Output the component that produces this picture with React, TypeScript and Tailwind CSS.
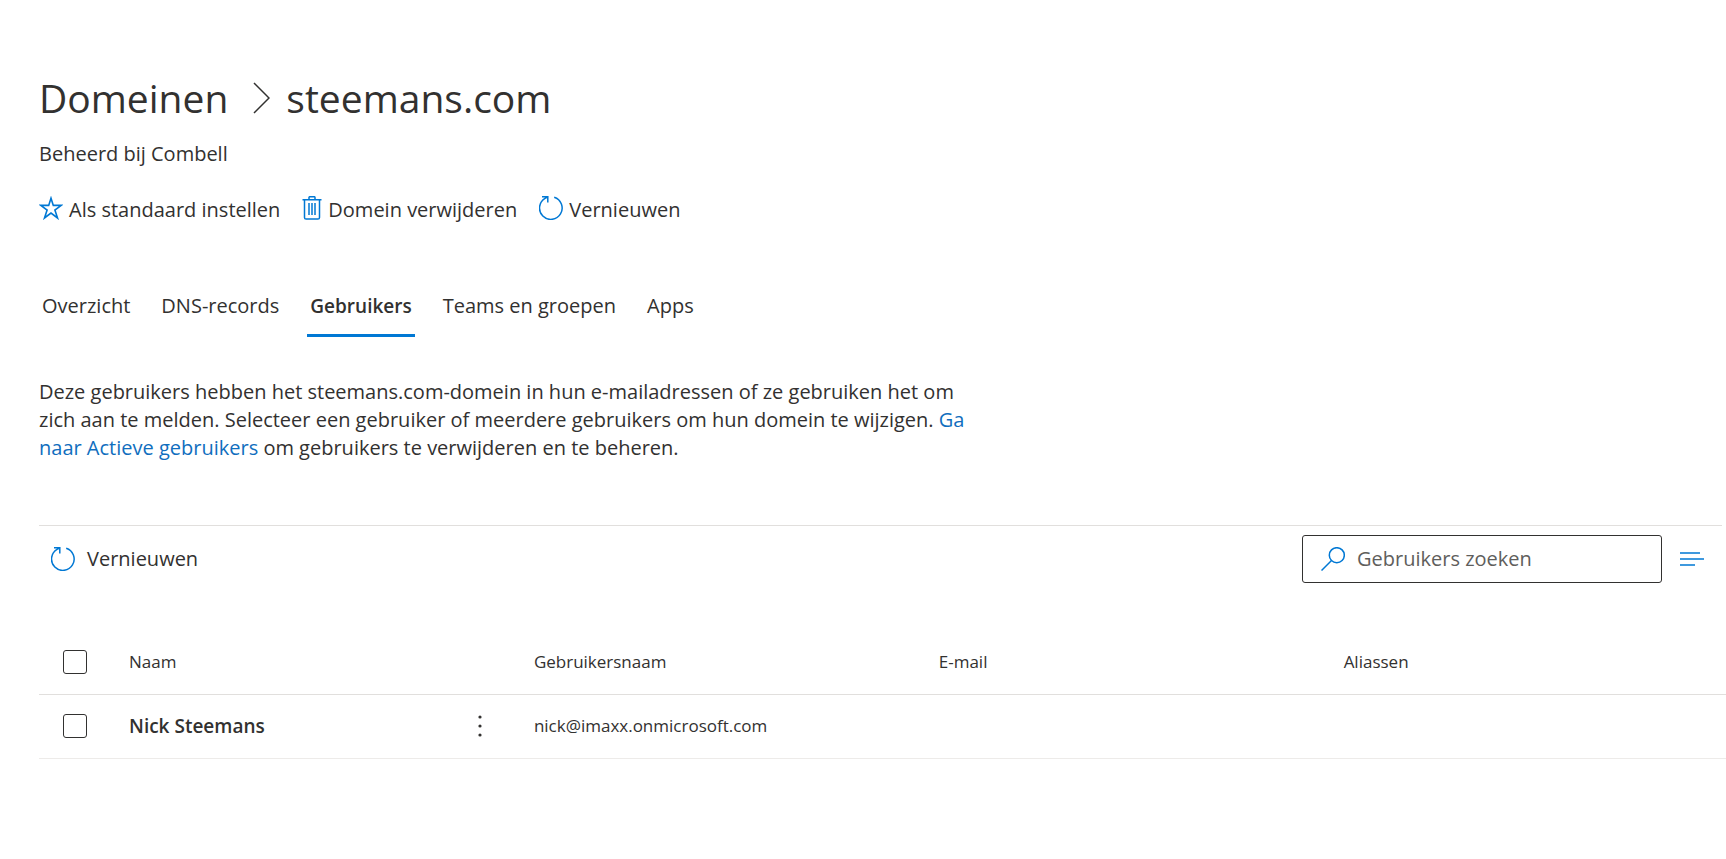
import type { ReactNode } from 'react'

interface User {
  id: string
  name: string
  username: string
  email: string
  aliases: string
}

interface CommandButtonProps {
  icon: ReactNode
  label: string
  className?: string
}

const tabs = ['Overzicht', 'DNS-records', 'Gebruikers', 'Teams en groepen', 'Apps']

const users: User[] = [
  { id: 'nick', name: 'Nick Steemans', username: 'nick@imaxx.onmicrosoft.com', email: '', aliases: '' },
]

function ChevronIcon() {
  return (
    <svg width="18" height="32" viewBox="0 0 18 32" fill="none" stroke="#323130" strokeWidth="1.5" aria-hidden="true">
      <path d="M2 1l15 15L2 31" />
    </svg>
  )
}

function StarIcon() {
  return (
    <svg width="24" height="24" viewBox="0 0 24 24" fill="none" stroke="#0078d4" strokeWidth="1.6" aria-hidden="true">
      <path d="M12 2.2l2.3 7.2h7.9l-6.3 4.6 2.6 8-6.5-5-6.5 5 2.6-8-6.3-4.6h7.9z" />
    </svg>
  )
}

function TrashIcon() {
  return (
    <svg width="20" height="24" viewBox="0 0 20 24" fill="none" stroke="#0078d4" strokeWidth="1.5" aria-hidden="true">
      <path d="M.5 3.7h19M7 3.7V1.6q0-.9.9-.9h4.2q.9 0 .9.9v2.1M2.5 3.7v17.8q0 1.6 1.6 1.6h11.8q1.6 0 1.6-1.6V3.7" />
      <path d="M7 7v12M10 7v12M13 7v12" />
    </svg>
  )
}

function RefreshIcon() {
  return (
    <svg width="24" height="24" viewBox="0 0 24 24" fill="none" stroke="#0078d4" strokeWidth="1.5" aria-hidden="true">
      <path d="M15.2 1.3A11.3 11.3 0 1 1 6 2.4L8.6 1M3 .8h5.8v5.8" />
    </svg>
  )
}

function SearchIcon() {
  return (
    <svg width="24" height="24" viewBox="0 0 24 24" fill="none" stroke="#0078d4" strokeWidth="1.5" aria-hidden="true">
      <circle cx="15.8" cy="8.2" r="7.5" />
      <path d="M10.5 13.5L.5 23.5" />
    </svg>
  )
}

function FilterIcon() {
  return (
    <svg width="24" height="14" viewBox="0 0 24 14" fill="none" stroke="#0078d4" strokeWidth="1.6" aria-hidden="true">
      <path d="M0 1h20M0 7h24M0 13h15" />
    </svg>
  )
}

function MoreIcon() {
  return (
    <svg width="4" height="22" viewBox="0 0 4 22" fill="#323130" aria-hidden="true">
      <circle cx="2" cy="2" r="1.6" />
      <circle cx="2" cy="11" r="1.6" />
      <circle cx="2" cy="20" r="1.6" />
    </svg>
  )
}

function CommandButton({ icon, label, className = 'items-start gap-1.5' }: CommandButtonProps) {
  return (
    <button type="button" className={`flex ${className}`}>
      {icon}
      <span>{label}</span>
    </button>
  )
}

function RowCheckbox({ label }: { label: string }) {
  return (
    <input
      type="checkbox"
      aria-label={label}
      className="block size-6 appearance-none rounded-[3px] border border-[#323130] bg-white checked:bg-[#0078d4]"
    />
  )
}

function UserTable() {
  return (
    <table className="w-full table-fixed border-collapse text-left text-[17px]">
      <colgroup>
        <col className="w-[90px]" />
        <col className="w-[24%]" />
        <col className="w-[24%]" />
        <col className="w-[24%]" />
        <col />
      </colgroup>
      <thead>
        <tr className="h-16 border-b border-[#e1dfdd]">
          <th className="pl-6">
            <RowCheckbox label="Alle gebruikers selecteren" />
          </th>
          <th className="font-normal">Naam</th>
          <th className="font-normal">Gebruikersnaam</th>
          <th className="font-normal">E-mail</th>
          <th className="font-normal">Aliassen</th>
        </tr>
      </thead>
      <tbody>
        {users.map(user => (
          <tr key={user.id} className="h-16 border-b border-[#edebe9]">
            <td className="pl-6">
              <RowCheckbox label={`${user.name} selecteren`} />
            </td>
            <td>
              <div className="flex items-center justify-between pr-[52px]">
                <span className="text-[19px] font-semibold">{user.name}</span>
                <button type="button" aria-label="Meer acties">
                  <MoreIcon />
                </button>
              </div>
            </td>
            <td>{user.username}</td>
            <td>{user.email}</td>
            <td>{user.aliases}</td>
          </tr>
        ))}
      </tbody>
    </table>
  )
}

function App() {
  return (
    <main className="min-h-screen bg-white pt-[71px] pl-[39px] font-['Segoe_UI','Open_Sans',sans-serif] text-[20px] leading-7 text-[#323130]">
      {/* Breadcrumb title */}
      <h1 className="flex items-center text-[39px] leading-[54px]">
        <a href="#domeinen">Domeinen</a>
        <span className="mr-4 ml-6">
          <ChevronIcon />
        </span>
        <span>steemans.com</span>
      </h1>
      <p className="mt-[15px]">Beheerd bij Combell</p>

      {/* Domain commands */}
      <div className="mt-7 flex items-center gap-[22px]">
        <CommandButton icon={<StarIcon />} label="Als standaard instellen" />
        <CommandButton icon={<TrashIcon />} label="Domein verwijderen" />
        <CommandButton icon={<RefreshIcon />} label="Vernieuwen" />
      </div>

      <nav className="mt-[60px] flex gap-[25px]">
        {tabs.map(tab => (
          <button
            key={tab}
            type="button"
            className={`border-b-3 px-[3px] pt-2 pb-[14px] ${
              tab === 'Gebruikers' ? 'border-[#0078d4] text-[19px] font-semibold' : 'border-transparent'
            }`}
          >
            {tab}
          </button>
        ))}
      </nav>

      <p className="mt-[41px] max-w-[930px]">
        Deze gebruikers hebben het steemans.com-domein in hun e-mailadressen of ze gebruiken het om zich aan te
        melden. Selecteer een gebruiker of meerdere gebruikers om hun domein te wijzigen.{' '}
        <a href="#actieve-gebruikers" className="text-[#106ebe]">
          Ga naar Actieve gebruikers
        </a>{' '}
        om gebruikers te verwijderen en te beheren.
      </p>

      {/* List toolbar */}
      <div className="mt-[63px] mr-1 flex items-center justify-between border-t border-[#e1dfdd] pt-[9px] pr-[18px] pl-3">
        <CommandButton icon={<RefreshIcon />} label="Vernieuwen" className="items-center gap-3" />
        <div className="flex items-center gap-[18px]">
          <label className="flex h-12 w-[360px] items-center gap-3 rounded-[3px] border border-[#323130] px-[18px]">
            <SearchIcon />
            <input
              type="search"
              aria-label="Gebruikers zoeken"
              placeholder="Gebruikers zoeken"
              className="min-w-0 flex-1 outline-none placeholder:text-[#605e5c]"
            />
          </label>
          <button type="button" aria-label="Filteren">
            <FilterIcon />
          </button>
        </div>
      </div>

      <div className="mt-[47px]">
        <UserTable />
      </div>
    </main>
  )
}

export default App
